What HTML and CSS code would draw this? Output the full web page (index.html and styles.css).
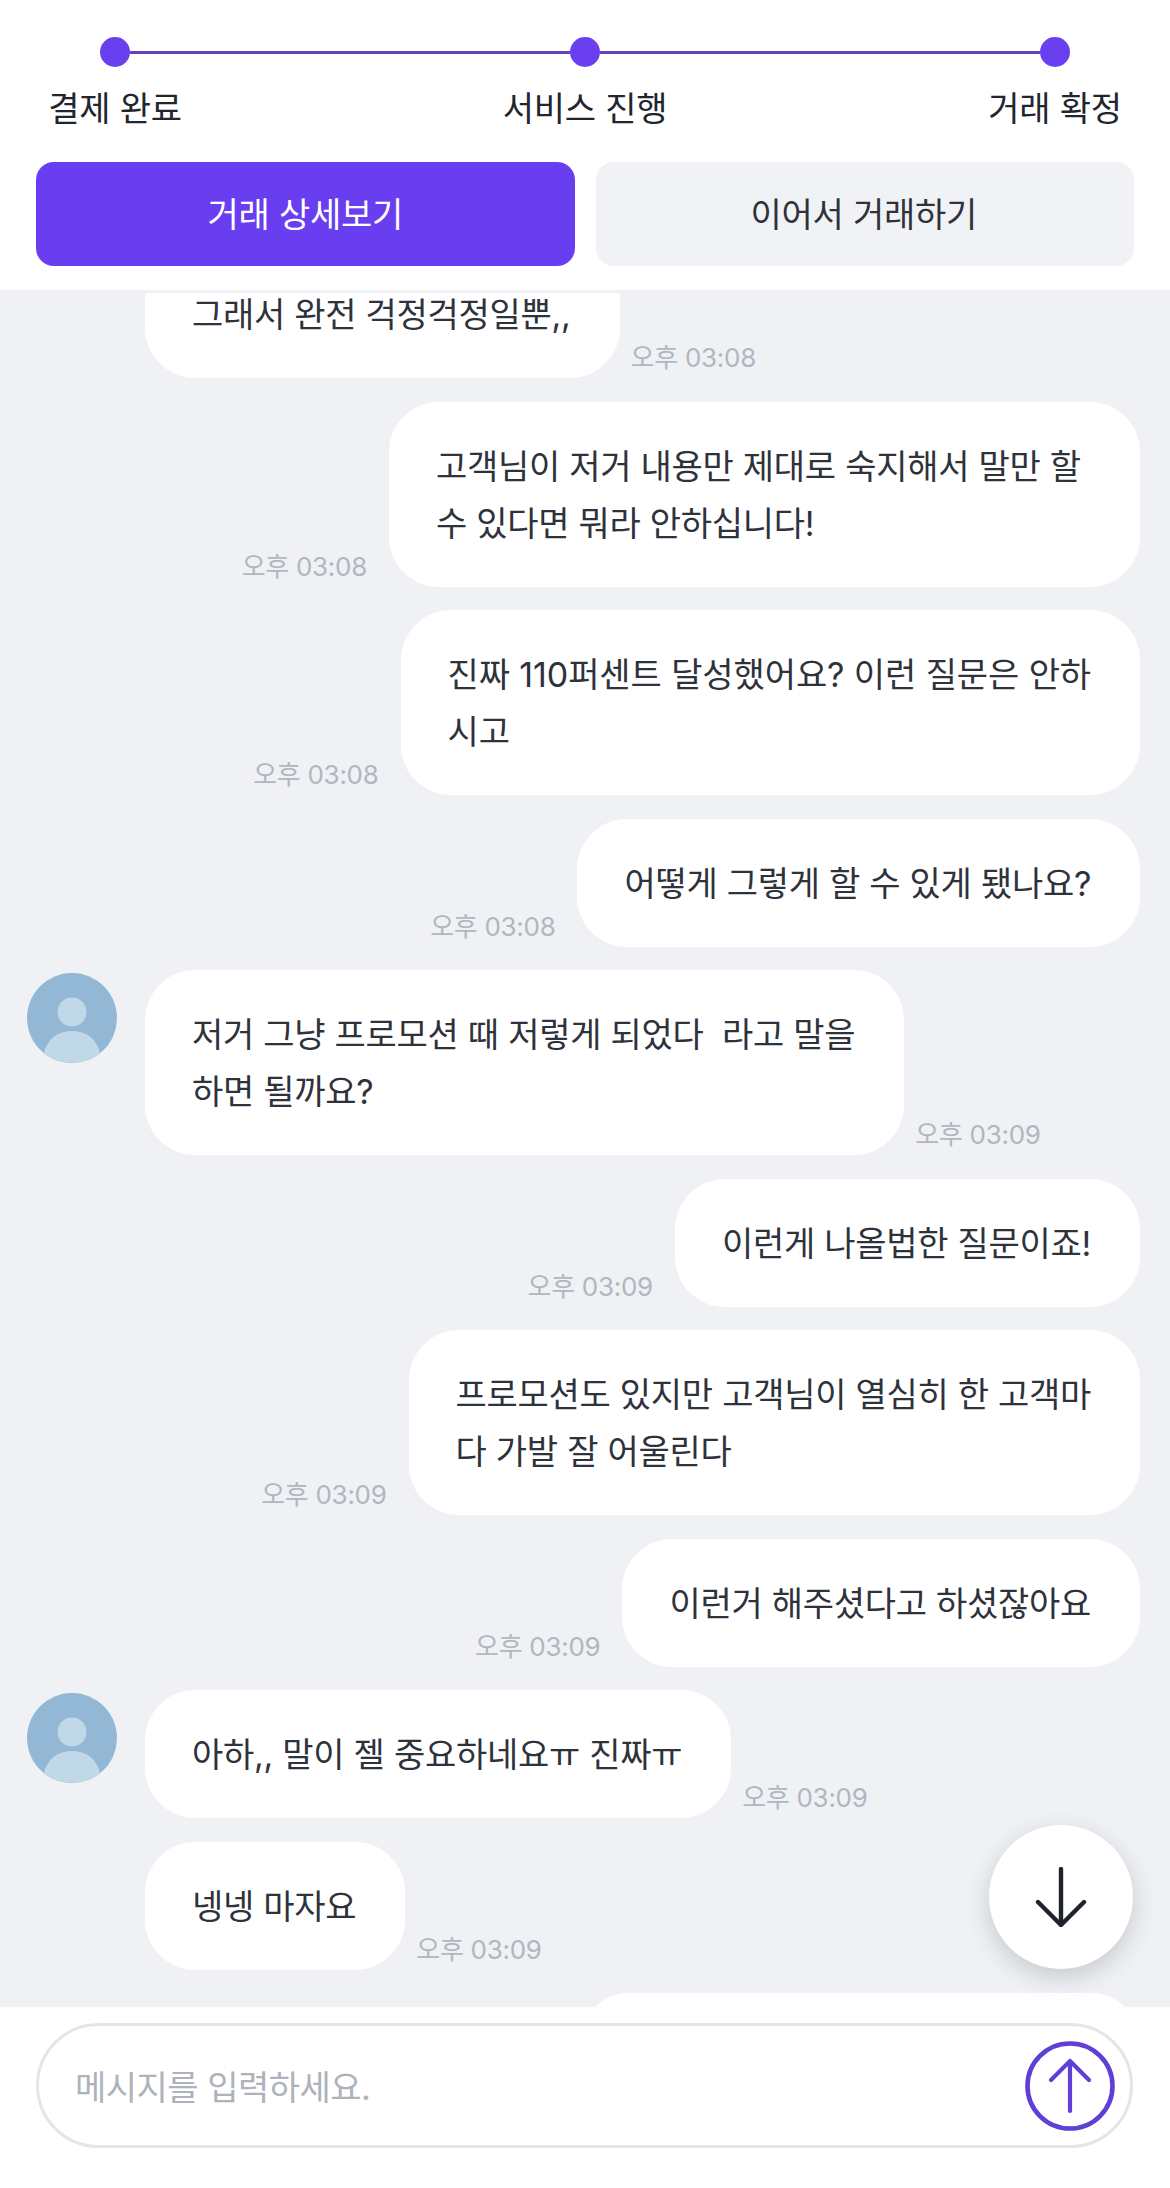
FILE: index.html
```html
<!DOCTYPE html>
<html lang="ko">
<head>
<meta charset="utf-8">
<title>채팅</title>
<link rel="stylesheet" href="styles.css">
</head>
<body>
<div class="page">
  <header class="top">
    <div class="track">
      <span class="dot"></span><span class="line"></span><span class="dot"></span><span class="line"></span><span class="dot"></span>
    </div>
    <div class="labels">
      <span>결제 완료</span><span>서비스 진행</span><span>거래 확정</span>
    </div>
    <div class="actions">
      <button class="btn btn-primary">거래 상세보기</button>
      <button class="btn btn-muted">이어서 거래하기</button>
    </div>
  </header>
  <main class="chat">
    <div class="messages">
      <div class="row in first"><div class="bubble">그래서 완전 걱정걱정일뿐,,</div><time class="time">오후 03:08</time></div>
      <div class="row out"><time class="time">오후 03:08</time><div class="bubble bubble-wide">고객님이 저거 내용만 제대로 숙지해서 말만 할<br>수 있다면 뭐라 안하십니다!</div></div>
      <div class="row out"><time class="time">오후 03:08</time><div class="bubble bubble-loose">진짜 110퍼센트 달성했어요? 이런 질문은 안하<br>시고</div></div>
      <div class="row out"><time class="time">오후 03:08</time><div class="bubble">어떻게 그렇게 할 수 있게 됐나요?</div></div>
      <div class="row in">
        <svg class="avatar" viewBox="0 0 90 90"><circle cx="45" cy="45" r="45" fill="#92b8d6"/><circle cx="45" cy="39" r="14.5" fill="#c1d8e8"/><path d="M17 80C20 66 31 58 45 58s25 8 28 22A45 45 0 0 1 17 80Z" fill="#c1d8e8"/></svg>
        <div class="bubble">저거 그냥 프로모션 때 저렇게 되었다&nbsp; 라고 말을<br>하면 될까요?</div><time class="time">오후 03:09</time>
      </div>
      <div class="row out"><time class="time">오후 03:09</time><div class="bubble">이런게 나올법한 질문이죠!</div></div>
      <div class="row out"><time class="time">오후 03:09</time><div class="bubble">프로모션도 있지만 고객님이 열심히 한 고객마<br>다 가발 잘 어울린다</div></div>
      <div class="row out"><time class="time">오후 03:09</time><div class="bubble">이런거 해주셨다고 하셨잖아요</div></div>
      <div class="row in">
        <svg class="avatar" viewBox="0 0 90 90"><circle cx="45" cy="45" r="45" fill="#92b8d6"/><circle cx="45" cy="39" r="14.5" fill="#c1d8e8"/><path d="M17 80C20 66 31 58 45 58s25 8 28 22A45 45 0 0 1 17 80Z" fill="#c1d8e8"/></svg>
        <div class="bubble">아하,, 말이 젤 중요하네요ㅠ 진짜ㅠ</div><time class="time">오후 03:09</time>
      </div>
      <div class="row in"><div class="bubble">넹넹 마자요</div><time class="time">오후 03:09</time></div>
      <div class="row out"><div class="bubble bubble-peek"></div></div>
    </div>
    <button class="fab" aria-label="아래로">
      <svg viewBox="0 0 60 60" width="60" height="60"><path d="M30 2V58M7 35 30 58 53 35" fill="none" stroke="#1f232b" stroke-width="4.4" stroke-linecap="round" stroke-linejoin="round"/></svg>
    </button>
  </main>
  <footer class="composer">
    <div class="input">
      <span class="placeholder">메시지를 입력하세요.</span>
      <svg class="send" viewBox="0 0 90 90" width="90" height="90"><circle cx="45" cy="45" r="42.5" fill="none" stroke="#5f3fd6" stroke-width="4.6"/><path d="M45 20V70M26 39 45 20 64 39" fill="none" stroke="#5f3fd6" stroke-width="4.2" stroke-linecap="round" stroke-linejoin="round"/></svg>
    </div>
  </footer>
</div>
</body>
</html>
```
FILE: styles.css
```css
* { box-sizing: border-box; }
html, body { margin: 0; padding: 0; }
body {
  font-family: "Inter", "Noto Sans CJK KR", sans-serif;
  color: #2e323b;
  background: #fff;
  letter-spacing: -0.28px;
}
.page {
  width: 1170px;
  height: 2188px;
  display: flex;
  flex-direction: column;
  overflow: hidden;
}
.top {
  height: 290px;
  flex: none;
  padding-top: 37px;
  background: #fff;
}
.track {
  display: flex;
  align-items: center;
  padding: 0 100px;
}
.dot {
  width: 30px;
  height: 30px;
  border-radius: 50%;
  background: #6a3ff0;
  flex: none;
}
.line {
  flex: 1;
  height: 3px;
  background: #6443c2;
}
.labels {
  display: grid;
  grid-template-columns: repeat(3, 170px);
  justify-content: space-between;
  margin-top: 17px;
  padding: 0 30px;
  font-size: 34px;
  line-height: 50px;
  text-align: center;
  color: #22252d;
}
.actions {
  display: flex;
  gap: 21px;
  margin-top: 28px;
  padding: 0 36px;
}
.btn {
  flex: 1;
  height: 104px;
  padding: 0 0 3px;
  border: 0;
  border-radius: 18px;
  font: inherit;
  font-size: 34px;
  letter-spacing: inherit;
}
.btn-primary { background: #683ef0; color: #fff; }
.btn-muted { background: #f0f2f5; color: #2e323b; text-indent: -2px; }
.chat {
  flex: 1;
  min-height: 0;
  position: relative;
  display: flex;
  flex-direction: column;
  padding-top: 3px;
  background: #eff1f5;
}
.messages {
  flex: 1;
  min-height: 0;
  overflow: hidden;
  display: flex;
  flex-direction: column;
  gap: 23.5px;
  padding: 0 30px 0 27px;
}
.row {
  display: flex;
  align-items: flex-end;
  flex: none;
}
.row.first { margin-top: -43px; }
.row.in { padding-left: 118px; gap: 11px; }
.row.out { justify-content: flex-end; gap: 22px; }
.row.in:has(.avatar) { padding-left: 0; }
.avatar {
  width: 90px;
  height: 90px;
  flex: none;
  align-self: flex-start;
  margin: 3px 17px 0 0;
}
.bubble {
  padding: 36px 49px 35px 47px;
  background: #fff;
  border-radius: 50px;
  font-size: 34px;
  line-height: 57px;
  white-space: nowrap;
}
.bubble-wide { width: 751px; }
.bubble-loose { letter-spacing: -0.1px; }
.bubble-peek { width: 560px; height: 128px; }
.time {
  margin-bottom: 3px;
  font-size: 26px;
  line-height: 34px;
  color: #b1b6c0;
  white-space: nowrap;
}
.fab {
  position: absolute;
  left: 989px;
  top: 1535px;
  width: 144px;
  height: 144px;
  padding: 0;
  border: 0;
  border-radius: 50%;
  background: #fff;
  box-shadow: 0 8px 24px rgba(40, 44, 52, 0.2);
  display: flex;
  align-items: center;
  justify-content: center;
}
.composer {
  height: 181px;
  flex: none;
  padding: 16px 37px 0 36px;
  background: #fff;
}
.input {
  height: 125px;
  display: flex;
  align-items: center;
  justify-content: space-between;
  padding: 0 15px 0 36px;
  border: 3px solid #e4e5e9;
  border-radius: 63px;
}
.placeholder {
  font-size: 34px;
  letter-spacing: -0.5px;
  color: #aeb2ba;
}
.send { flex: none; }
```
